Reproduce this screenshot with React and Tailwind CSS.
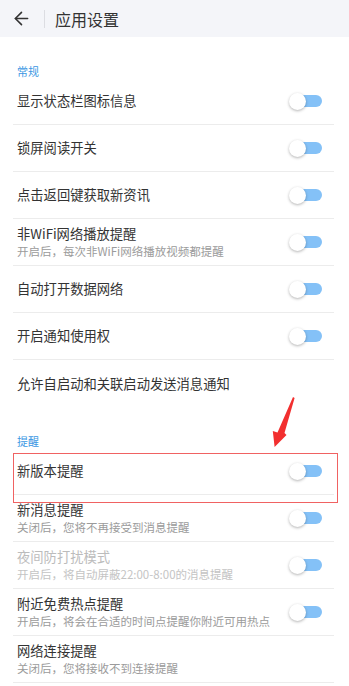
import { ArrowLeft } from 'lucide-react';

const general = [
  { title: '显示状态栏图标信息', toggle: true },
  { title: '锁屏阅读开关', toggle: true },
  { title: '点击返回键获取新资讯', toggle: true },
  { title: '非WiFi网络播放提醒', sub: '开启后，每次非WiFi网络播放视频都提醒', toggle: true },
  { title: '自动打开数据网络', toggle: true },
  { title: '开启通知使用权', toggle: true },
  { title: '允许自启动和关联启动发送消息通知', last: true },
];

const reminders = [
  { title: '新版本提醒', toggle: true },
  { title: '新消息提醒', sub: '关闭后，您将不再接受到消息提醒', toggle: true },
  { title: '夜间防打扰模式', sub: '开启后，将自动屏蔽22:00-8:00的消息提醒', toggle: true, disabled: true },
  { title: '附近免费热点提醒', sub: '开启后，将会在合适的时间点提醒你附近可用热点', toggle: true },
  { title: '网络连接提醒', sub: '关闭后，您将接收不到连接提醒' },
];

function Toggle() {
  return (
    <div className="relative w-[33px] h-[17px] flex items-center">
      <div className="absolute left-[2px] right-0 h-[12px] rounded-full bg-[#84c1f7]" />
      <div className="absolute left-0 w-[17px] h-[17px] rounded-full bg-white shadow-[0_1px_3px_rgba(0,0,0,0.3)]" />
    </div>
  );
}

function Row({ item }) {
  return (
    <div className={`ml-[13px] mr-[15px] h-[47px] flex items-center justify-between pl-[4px] pr-[12px] ${item.last ? '' : 'border-b border-[#ececec]'}`}>
      <div className="flex flex-col">
        <span className={`text-[13.3px] leading-[18px] ${item.disabled ? 'text-[#bcbcbc]' : 'text-[#333]'}`}>{item.title}</span>
        {item.sub && <span className={`text-[11.5px] leading-[16px] ${item.disabled ? 'text-[#c4c4c4]' : 'text-[#9b9b9b]'}`}>{item.sub}</span>}
      </div>
      {item.toggle && <Toggle />}
    </div>
  );
}

function Section({ label }) {
  return (
    <div className="h-[41px] flex items-end px-[17px]">
      <span className="text-[11px] leading-[14px] text-[#3b97e3]">{label}</span>
    </div>
  );
}

export default function App() {
  return (
    <div className="relative w-[349px] h-[686px] overflow-hidden bg-white" style={{ fontFamily: '"Noto Sans CJK SC", "Noto Sans", sans-serif' }}>
      <div className="h-[37px] bg-[#f4f5f9] flex items-center">
        <ArrowLeft className="ml-[11px] w-[21px] h-[21px] text-[#333]" strokeWidth={1.8} />
        <div className="ml-[12px] w-px h-[18px] bg-[#dcdde2]" />
        <span className="ml-[10px] text-[16px] text-[#333]">应用设置</span>
      </div>
      <Section label="常规" />
      {general.map((it) => <Row key={it.title} item={it} />)}
      <Section label="提醒" />
      {reminders.map((it) => <Row key={it.title} item={it} />)}

      <div className="absolute left-[13px] top-[453px] w-[325px] h-[50px] border border-[#f06262]" />
      <svg className="absolute left-0 top-0" width="349" height="686" viewBox="0 0 349 686">
        <polygon points="293,397 294.6,398 284.5,433 286.5,435 274.6,447 272.8,431 277.5,432.5" fill="#f22f2f" />
      </svg>
    </div>
  );
}
